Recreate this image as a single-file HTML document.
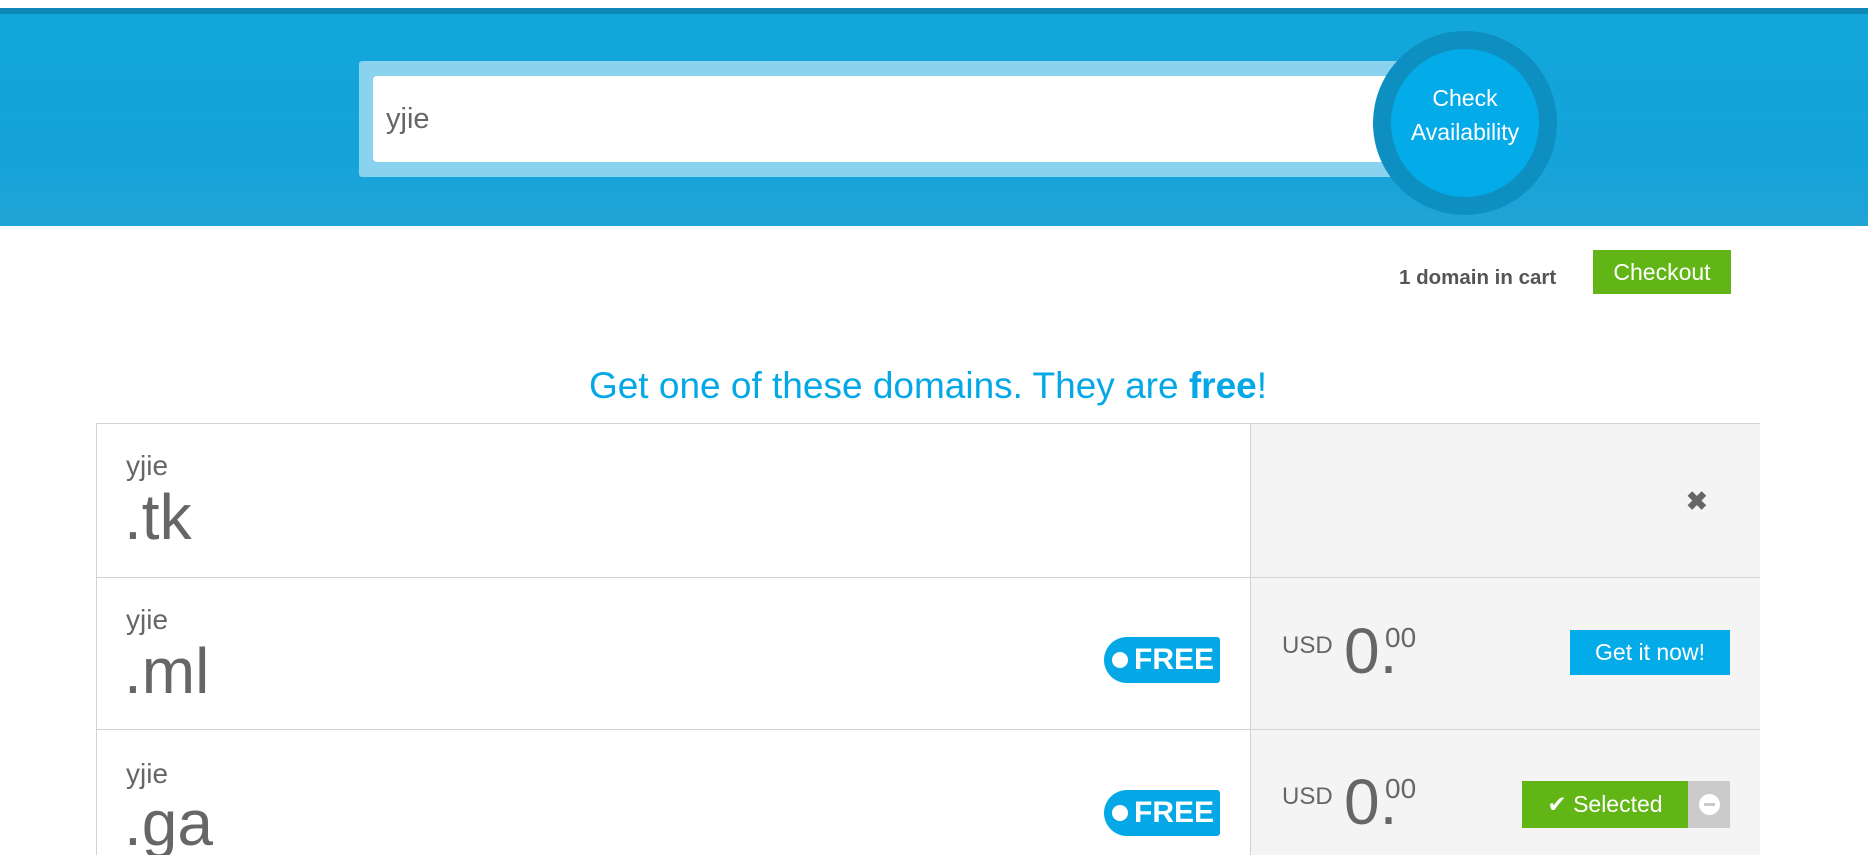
<!DOCTYPE html>
<html style="width:1868px;height:855px;overflow:hidden"><head><meta charset="utf-8"><style>
*{margin:0;padding:0;box-sizing:border-box}
body{width:1868px;height:855px;overflow:hidden;background:#fff;font-family:"Liberation Sans",sans-serif}
#w{position:relative;width:1868px;height:855px;overflow:hidden}
.a{position:absolute}
</style></head><body><div id="w">
<div class="a" style="left:0;top:8px;width:1868px;height:6px;background:#0f88b8"></div>
<div class="a" style="left:0;top:14px;width:1868px;height:212px;background:linear-gradient(180deg,#12a6db 0%,#14a4da 70%,#22a3d6 100%)"></div>
<div class="a" style="left:359px;top:61px;width:1046px;height:116px;background:#8ad3ee;border-radius:3px"></div>
<div class="a" style="left:373px;top:76px;width:1027px;height:86px;background:#fff;border-radius:4px"></div>
<div class="a" style="left:386px;top:103px;font-size:29px;color:#666">yjie</div>
<div class="a" style="left:1373px;top:31px;width:184px;height:184px;border-radius:50%;background:#0e8fc2"></div>
<div class="a" style="left:1391px;top:49px;width:148px;height:148px;border-radius:50%;background:#03abe8;color:#fff;font-size:23px;line-height:34px;text-align:center;padding-top:32px">Check<br>Availability</div>
<div class="a" style="left:1399px;top:266px;font-size:20.5px;color:#555;font-weight:bold">1 domain in cart</div>
<div class="a" style="left:1593px;top:250px;width:138px;height:44px;background:#61b616;color:#fff;font-size:23px;line-height:44px;text-align:center">Checkout</div>
<div class="a" style="left:0;top:365px;width:1856px;text-align:center;font-size:37px;color:#05a8e6">Get one of these domains. They are <b>free</b>!</div>
<div class="a" style="left:96px;top:423px;width:1664px;height:480px;border:1px solid #d2d2d2"></div>
<div class="a" style="left:1250px;top:424px;width:510px;height:480px;background:#f4f4f4;border-left:1px solid #d2d2d2"></div>
<div class="a" style="left:96px;top:577px;width:1664px;height:1px;background:#d2d2d2"></div>
<div class="a" style="left:96px;top:729px;width:1664px;height:1px;background:#d2d2d2"></div>

<div class="a" style="left:126px;top:450px;font-size:28px;color:#666">yjie</div>
<div class="a" style="left:124px;top:480px;font-size:64px;color:#666">.tk</div>
<div class="a" style="left:1686px;top:486px;font-size:26px;color:#666;font-weight:bold">✖</div>

<div class="a" style="left:126px;top:604px;font-size:28px;color:#666">yjie</div>
<div class="a" style="left:124px;top:634px;font-size:64px;color:#666">.ml</div>
<div class="a" style="left:1104px;top:637px;width:116px;height:46px;background:#05a8e6;border-radius:23px 3px 3px 23px;color:#fff;font-weight:bold;font-size:30px;line-height:46px;padding-left:30px">FREE</div>
<div class="a" style="left:1112px;top:652px;width:16px;height:16px;border-radius:50%;background:#fff"></div>
<div class="a" style="left:1282px;top:632px;font-size:24px;color:#666">USD</div>
<div class="a" style="left:1344px;top:614px;font-size:64px;color:#666">0.</div>
<div class="a" style="left:1385px;top:622px;font-size:28px;color:#666">00</div>
<div class="a" style="left:1570px;top:630px;width:160px;height:45px;background:#03abe8;color:#fff;font-size:23px;line-height:45px;text-align:center">Get it now!</div>

<div class="a" style="left:126px;top:758px;font-size:28px;color:#666">yjie</div>
<div class="a" style="left:124px;top:786px;font-size:64px;color:#666">.ga</div>
<div class="a" style="left:1104px;top:790px;width:116px;height:46px;background:#05a8e6;border-radius:23px 3px 3px 23px;color:#fff;font-weight:bold;font-size:30px;line-height:46px;padding-left:30px">FREE</div>
<div class="a" style="left:1112px;top:805px;width:16px;height:16px;border-radius:50%;background:#fff"></div>
<div class="a" style="left:1282px;top:783px;font-size:24px;color:#666">USD</div>
<div class="a" style="left:1344px;top:765px;font-size:64px;color:#666">0.</div>
<div class="a" style="left:1385px;top:773px;font-size:28px;color:#666">00</div>
<div class="a" style="left:1522px;top:781px;width:166px;height:47px;background:#61b616;color:#fff;font-size:23px;line-height:47px;text-align:center">✔ Selected</div>
<div class="a" style="left:1688px;top:781px;width:42px;height:47px;background:#cbcbcb"></div>
<div class="a" style="left:1699px;top:794px;width:21px;height:21px;border-radius:50%;background:#fff"></div>
<div class="a" style="left:1704px;top:803px;width:11px;height:3px;background:#cbcbcb"></div>
</div></body></html>
